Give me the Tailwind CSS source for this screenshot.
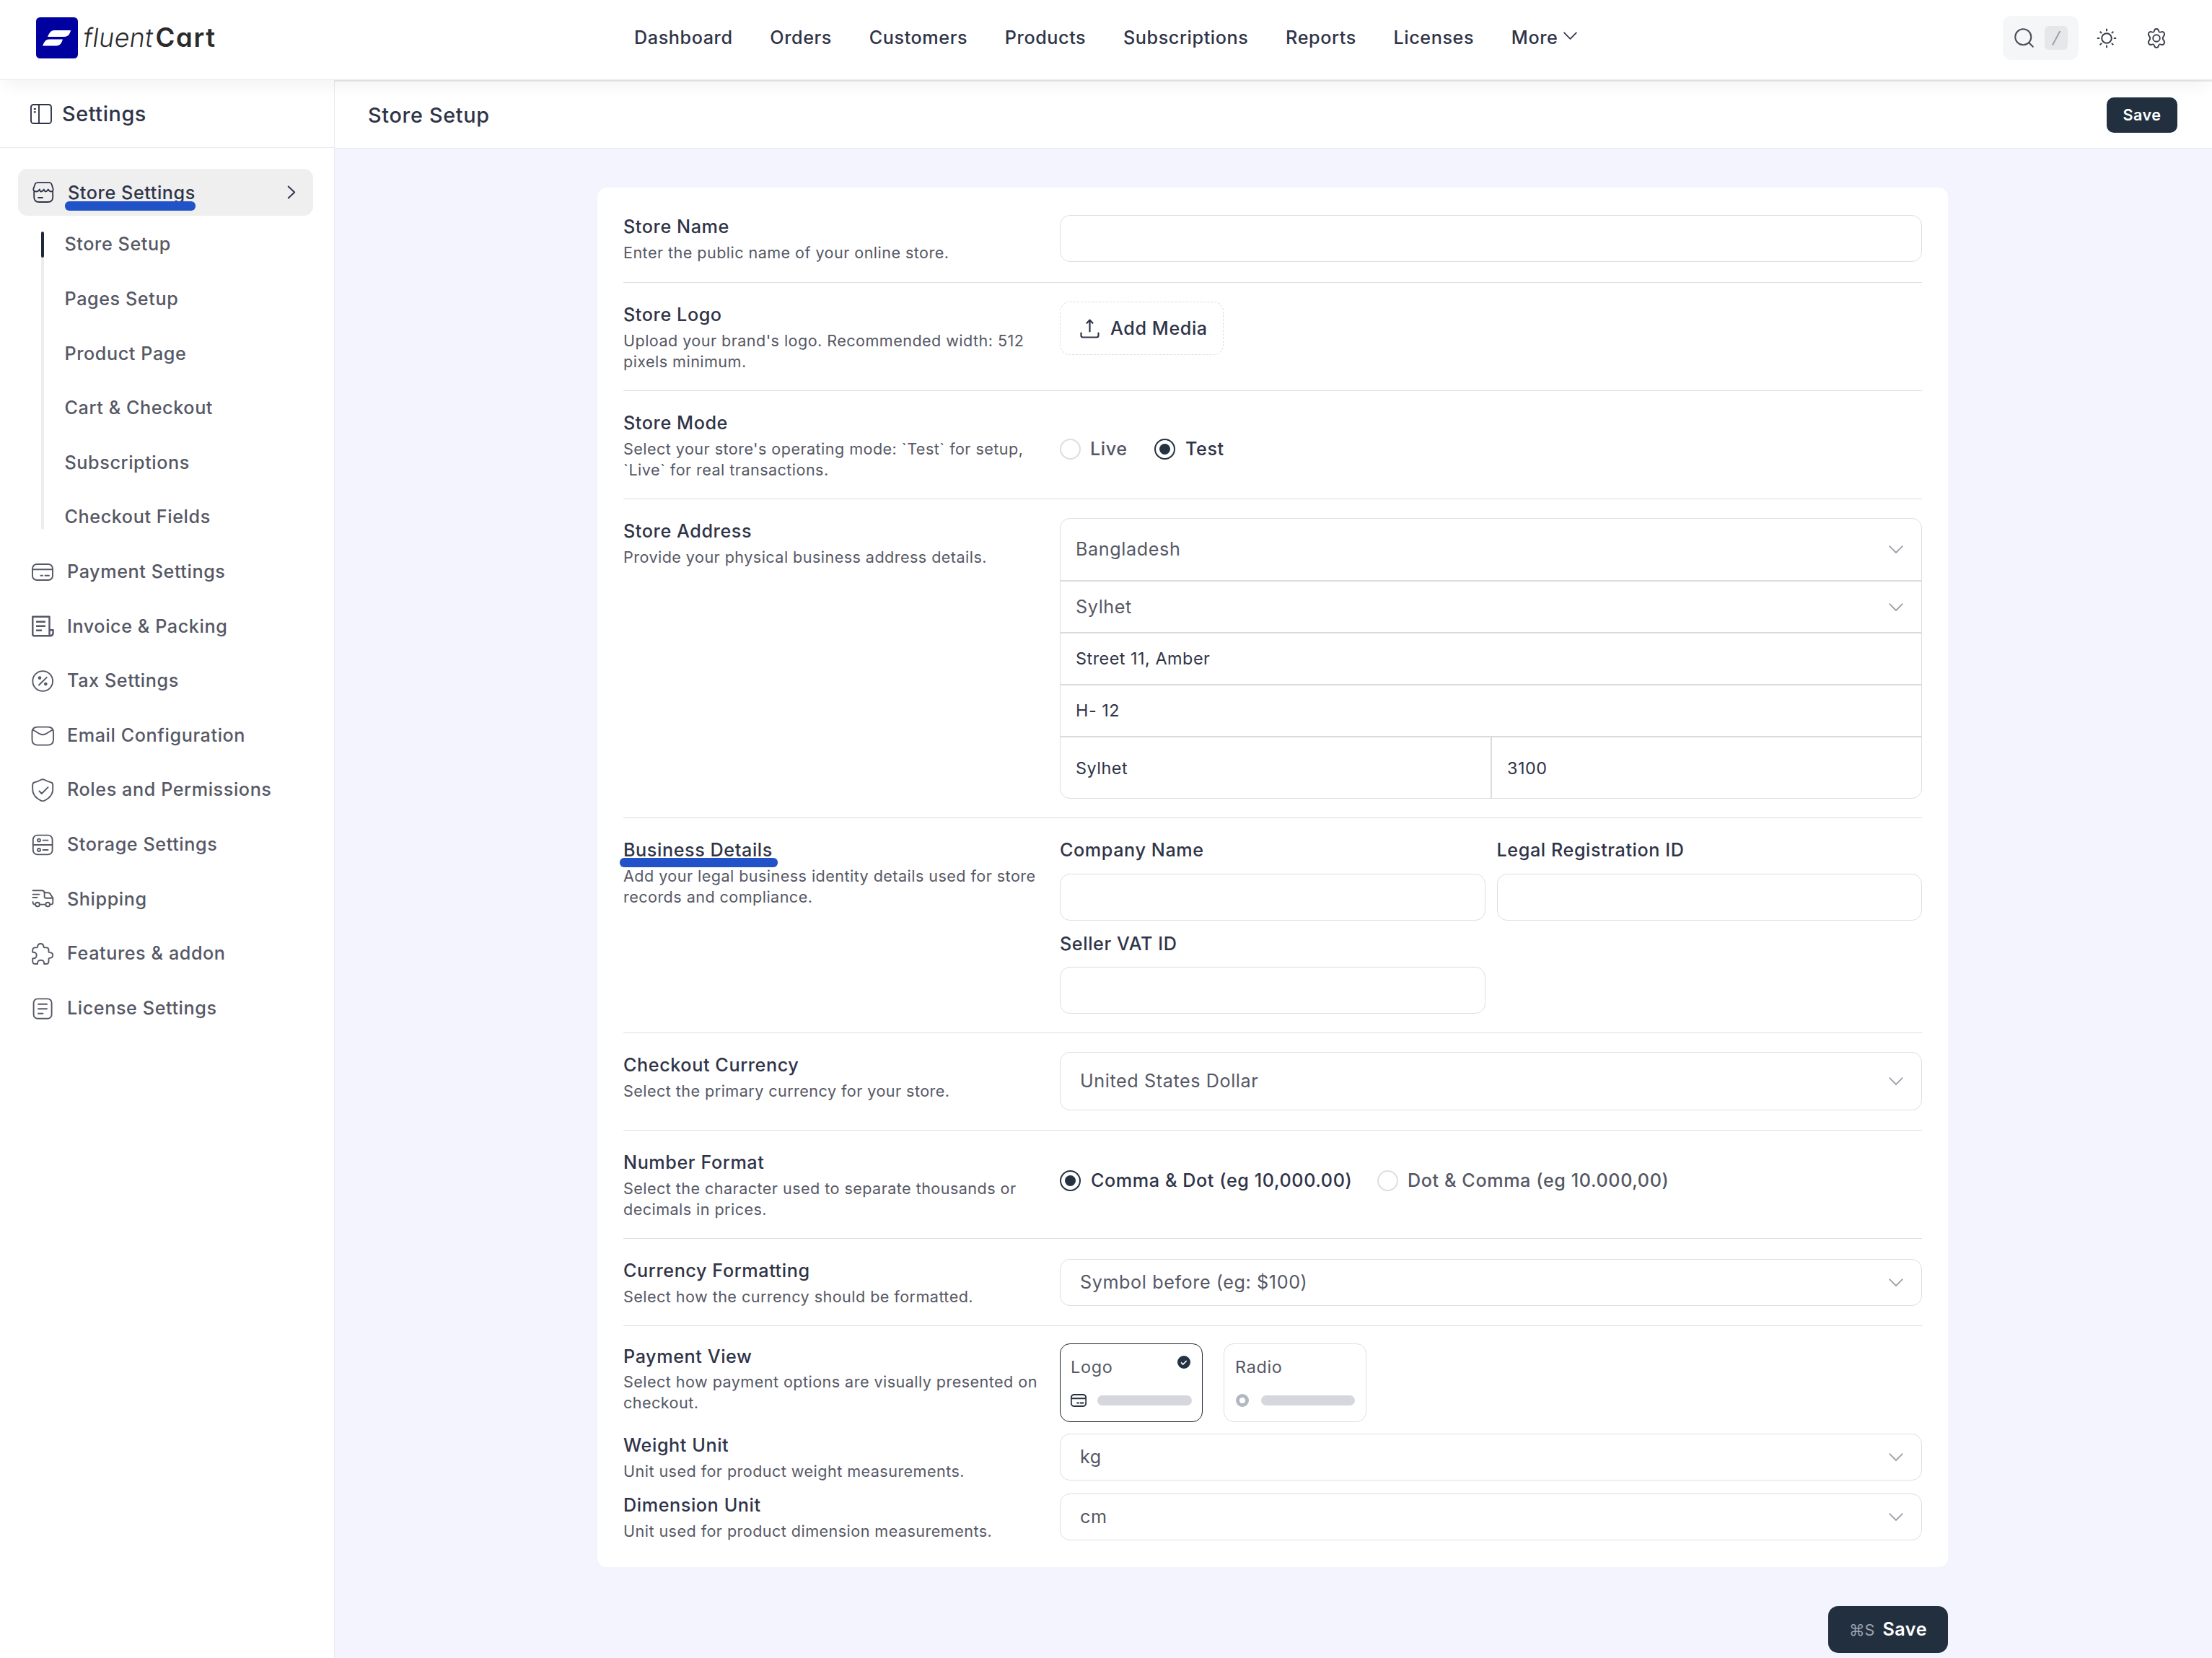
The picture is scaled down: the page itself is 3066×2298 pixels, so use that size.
<!DOCTYPE html>
<html lang="en">
<head>
<meta charset="utf-8">
<title>Store Setup</title>
<script src="https://cdn.jsdelivr.net/npm/@tailwindcss/browser@4"></script>
</head>
<body class="h-[2298px] w-[3066px] overflow-hidden bg-[#f3f4fd] font-['Inter',sans-serif] text-[25.2px] tracking-[0.58px] text-[#2f3448]">

<svg class="hidden">
  <symbol id="down" viewBox="0 0 20 12"><path d="M1.2 1.2 10 10l8.800-8.800" fill="none" stroke="currentColor" stroke-width="1.8" stroke-linecap="round" stroke-linejoin="round"/></symbol>
  <symbol id="card" viewBox="0 0 30 24"><g fill="none" stroke="currentColor" stroke-linecap="round"><rect x="1" y="1" width="28" height="22" rx="6"/><path d="M1 8.200h28M12.500 16.800h2.500M18.500 16.800h5.500"/></g></symbol>
</svg>

<!-- Top bar -->
<header class="relative z-10 flex h-[111px] items-center border-b border-[#e8e8e9] bg-white pb-[5px] shadow-[0_14px_22px_-6px_rgba(0,0,0,0.05)]">
  <div class="flex w-[879px] items-center pl-[50px]">
    <svg class="h-[57px] w-[58px]" viewBox="0 0 58 57"><rect width="58" height="57" rx="5.500" fill="#0000a0"/><path d="M25 18h23c-1 5-3.500 9-9 9H16c2-5 4.500-9 9-9Z" fill="#fff"/><path d="M18 30.500h19c-1.500 5-4 9-9 9H9c2-5 4-9 9-9Z" fill="#fff"/></svg>
    <div class="ml-[8px] flex text-[36px] leading-[57px] text-[#2b2b2b]">
      <span class="-skew-x-8 font-light tracking-[0.3px] [font-variant-ligatures:none]">fluent</span>
      <span class="ml-[3px] text-[36.500px] font-semibold tracking-[1.600px] [font-feature-settings:'cv11']">Cart</span>
    </div>
  </div>
  <nav class="mb-[2px] flex items-center gap-[51.700px] leading-[36px] font-medium">
    <a>Dashboard</a><a>Orders</a><a>Customers</a><a>Products</a><a>Subscriptions</a><a>Reports</a><a>Licenses</a>
    <a class="flex items-center">More <svg class="mb-[3px] ml-[8px] h-[12px] w-[19px]"><use href="#down"/></svg></a>
  </nav>
  <div class="ml-auto flex items-center pr-[63px]">
    <div class="mr-[25px] flex h-[61px] w-[105px] items-center rounded-[12px] bg-[#f4f6f7] pl-[16px]">
      <svg class="h-[28px] w-[28px]" viewBox="0 0 28 28" fill="none" stroke="#4b4d58" stroke-width="2" stroke-linecap="round"><circle cx="12.300" cy="12.300" r="11"/><path d="m20.300 20.300 5.500 5.500"/></svg>
      <span class="ml-[14px] flex h-[33px] w-[32px] items-center justify-center rounded-[6px] bg-[#e5e7e9]"><svg class="h-[20px] w-[12px]" viewBox="0 0 12 20"><path d="M11 .8 1.200 19" stroke="#9b9ea3" stroke-width="1.900" stroke-linecap="round"/></svg></span>
    </div>
    <svg class="h-[28px] w-[28px]" viewBox="0 0 28 28" fill="none" stroke="#3c3f4c" stroke-width="2"><circle cx="14" cy="14" r="6.800"/><path d="M14 .8v3.400M14 23.800v3.400M.8 14h3.400M23.800 14h3.400M4.700 4.700l2.400 2.400M20.900 20.900l2.400 2.400M4.700 23.300l2.400-2.400M20.900 7.100l2.400-2.400"/></svg>
    <svg class="ml-[41px] h-[28px] w-[28px]" viewBox="0 0 28 28" fill="none" stroke="#3c3f4c" stroke-width="1.900" stroke-linejoin="round"><circle cx="14" cy="14" r="4.800"/><path d="M11 3.700Q11.600 1 14 1t3 2.700q.5 2.700 3.200 1.700 2.800-1.200 4.300 1 1.500 2.600-.4 4.400-2.600 3.200 0 6.400 1.900 1.800.4 4.400-1.500 2.200-4.300 1-2.700-1-3.200 1.700Q16.400 27 14 27t-3-2.700q-.5-2.700-3.200-1.700-2.800 1.200-4.300-1-1.500-2.600.4-4.400 2.600-3.200 0-6.400-1.900-1.800-.4-4.400 1.500-2.200 4.300-1 2.700 1 3.200-1.700Z"/></svg>
  </div>
</header>

<div class="flex h-[2187px]">

  <!-- Sidebar -->
  <aside class="w-[464px] shrink-0 border-r border-[#ebebee] bg-white font-medium">
    <div class="flex h-[94px] items-center border-b border-[#ebebed] pt-[1px] pl-[42px] text-[28.800px]">
      <svg class="h-[28px] w-[30px]" viewBox="0 0 30 28" fill="none" stroke="#2f3448" stroke-width="1.900"><rect x="1" y="1" width="28" height="26" rx="3.500"/><path d="M12 1v26M4.800 7h3M4.800 11.200h3"/></svg>
      <span class="ml-[14px]">Settings</span>
    </div>

    <div class="relative mx-[25px] mt-[29px] mb-[2.400px] flex h-[65px] w-[409px] items-center rounded-[13px] bg-[#efefef] pl-[20px]">
      <svg class="h-[29px] w-[30px]" viewBox="0 0 30 29" fill="none" stroke="#2f3448" stroke-width="1.800" stroke-linecap="round" stroke-linejoin="round"><path d="M2.200 13.500V21q0 7 7 7h12q7 0 7-7v-7.500M7 1.200h16.500q2.300 0 3 2l2 6.300q.6 3.700-2.400 4-2.800 0-4.300-3-1.600 3-4.300 3-1-.3-1.700-3-1.600 3-4.300 3-1 0-1.600-3-1.600 3-4.600 3Q.6 13.200 1.400 9.500l2.200-6.300q.8-2 3.400-2ZM8 22h6"/></svg>
      <span class="mt-[2px] ml-[19px]">Store Settings</span>
      <svg class="ml-auto mr-[24px] h-[19px] w-[12px]" viewBox="0 0 12 19" fill="none" stroke="#2f3448" stroke-width="1.900" stroke-linecap="round" stroke-linejoin="round"><path d="m1.700 1.500 8.500 8-8.500 8"/></svg>
      <i class="absolute top-[45px] left-[65px] h-[13px] w-[181px] rounded-[6px] bg-[#2152c8]"></i>
    </div>

    <div class="flex text-[#565865]">
      <div class="mt-[20px] ml-[57px] h-[413px] w-[4px] rounded-full bg-[#ededee]"><div class="h-[36px] w-[4px] rounded-full bg-[#20283a]"></div></div>
      <ul class="ml-[28.500px] leading-[75.600px]">
        <li>Store Setup</li><li>Pages Setup</li><li>Product Page</li><li>Cart &amp; Checkout</li><li>Subscriptions</li><li>Checkout Fields</li>
      </ul>
    </div>

    <ul class="pl-[43px] leading-[75.600px] text-[#565865]">
      <li class="flex items-center"><svg class="mr-[18px] h-[32px] w-[32px]" viewBox="-1 -4 32 32" stroke-width="1.900"><use href="#card" width="30" height="24"/></svg>Payment Settings</li>
      <li class="flex items-center"><svg class="mr-[18px] h-[32px] w-[32px]" viewBox="0 0 32 32" fill="none" stroke="currentColor" stroke-width="2.400" stroke-linejoin="round"><path d="M25.500 21V2.800H2.300v24.400q0 2 2 2h22.800q3.500-.3 3.500-4V21.200h-5.100v5q0 3 1.600 3M7 9.800h13M7 15.800h13M7 21.800h8"/></svg>Invoice &amp; Packing</li>
      <li class="flex items-center"><svg class="mr-[18px] h-[32px] w-[32px]" viewBox="0 0 32 32" fill="none" stroke="currentColor" stroke-width="1.900" stroke-linecap="round"><circle cx="16.200" cy="16" r="13.900"/><path d="M21.800 10.800 11 21.500"/><circle cx="12" cy="11.600" r="1.400" fill="currentColor"/><circle cx="20.300" cy="20" r="1.400" fill="currentColor"/></svg>Tax Settings</li>
      <li class="flex items-center"><svg class="mr-[18px] h-[32px] w-[32px]" viewBox="0 0 32 32" fill="none" stroke="currentColor" stroke-width="1.900" stroke-linejoin="round"><path d="M9 3.600h14.500q7.500 0 7.500 7.500v10q0 7.500-7.500 7.500H9q-7.500 0-7.500-7.500v-10q0-7.500 7.500-7.500ZM3 7.800l9 5.400q4.200 2.200 8.400 0l9-5.400"/></svg>Email Configuration</li>
      <li class="flex items-center"><svg class="mr-[18px] h-[32px] w-[32px]" viewBox="0 0 32 32" fill="none" stroke="currentColor" stroke-width="1.900" stroke-linecap="round" stroke-linejoin="round"><path d="M14 1.700q2.300-1 4.600 0 4 2.300 9.100 3.600 2.500.7 2.500 3.500v6q0 8-6.800 13-5.200 3.600-7.200 3.600T9 27.800q-6.800-5-6.800-13v-6q0-2.800 2.500-3.500Q10 4 14 1.700ZM11.500 17.500l3.300 3.500 8.700-8.800"/></svg>Roles and Permissions</li>
      <li class="flex items-center"><svg class="mr-[18px] h-[32px] w-[32px]" viewBox="0 0 32 32" fill="none" stroke="currentColor" stroke-width="1.900" stroke-linecap="round"><rect x="2.800" y="2.600" width="26.800" height="26.800" rx="6"/><path d="M2.800 16h26.800M16.500 9.600h7M16.500 23h7"/><circle cx="11" cy="9.600" r="2"/><circle cx="11" cy="23" r="2"/></svg>Storage Settings</li>
      <li class="flex items-center"><svg class="mr-[18px] h-[32px] w-[32px]" viewBox="0 0 32 32" fill="none" stroke="currentColor" stroke-width="1.900" stroke-linecap="round" stroke-linejoin="round"><path d="M2.500 4.200H15q3.600 0 3.600 3.600v5.400q0 1.500 1.500 1.500h10.400M18.600 7.200h5.200q1.500 0 2.400 1.200l3.300 4.800q.8 1.300.8 2.500v5.300q0 2.600-2.800 2.600M2.500 9.600h9M2.500 14h6M2.500 20q0 3.600 3.200 3.600M12.200 23.600h7.500"/><circle cx="9" cy="23.600" r="2.900"/><circle cx="23.200" cy="23.600" r="2.900"/></svg>Shipping</li>
      <li class="flex items-center"><svg class="mr-[18px] h-[32px] w-[32px]" viewBox="0 0 32 32" fill="none" stroke="currentColor" stroke-width="1.900" stroke-linejoin="round"><path d="M9 6.500Q9.300 2 13.300 2t4.300 4.500q.2 .9 1.400.9h2q3.500 0 3.500 3.500v2q0 1.100 1 1.200 4.700.1 4.700 3.900t-4.700 3.900q-1 .1-1 1.200V26.500q0 3.500-3.500 3.500h-2.800q.4-5.300-4.600-5.300T9 30H6q-3.800 0-3.800-3.800v-3.800q5.500.2 5.500-4.300T2.200 13.800V11q0-3.600 3.600-3.600h2Q9 7.400 9 6.500Z"/></svg>Features &amp; addon</li>
      <li class="flex items-center"><svg class="mr-[18px] h-[32px] w-[32px]" viewBox="0 0 32 32" fill="none" stroke="currentColor" stroke-width="1.900" stroke-linecap="round"><rect x="3.600" y="2.400" width="25" height="27.400" rx="5.500"/><path d="M10 9.800h12M10 16.300h12M10 22.800h6.500"/></svg>License Settings</li>
    </ul>
  </aside>

  <!-- Main column -->
  <main class="flex grow flex-col items-center border-t-2 border-[#e9e9e9]">
    <div class="flex h-[93px] w-full items-center justify-between border-b border-[#ebebed] bg-white pr-[48px] pl-[46px]">
      <h1 class="pt-[1px] text-[28.800px] font-medium tracking-[0.700px]">Store Setup</h1>
      <button class="h-[49px] w-[98px] rounded-[10px] bg-[#222f3f] text-[21.600px] font-semibold tracking-[0.500px] text-white">Save</button>
    </div>

    <section class="mt-[54px] mr-[2px] h-[1912px] w-[1872px] shrink-0 rounded-[13px] bg-white px-[36px] pt-[36px]">

      <div class="flex h-[96px] justify-between border-b border-[#dddee0]">
        <div class="w-[590px]"><h3 class="mb-[4px] leading-[36px] font-medium">Store Name</h3><p class="text-[21.600px] leading-[28.800px] tracking-[0.440px] text-[#565865]">Enter the public name of your online store.</p></div>
        <div class="mt-[2px] h-[65px] w-[1195px] rounded-[14px] border border-[#dcdee1]"></div>
      </div>

      <div class="flex h-[150px] justify-between border-b border-[#dddee0] pt-[26px]">
        <div class="w-[590px]"><h3 class="mb-[4px] leading-[36px] font-medium">Store Logo</h3><p class="text-[21.600px] leading-[28.800px] tracking-[0.440px] text-[#565865]">Upload your brand's logo. Recommended width: 512<br>pixels minimum.</p></div>
        <div class="w-[1195px]">
          <div class="flex h-[74px] w-[227px] items-center rounded-[14px] border border-dashed border-[#dcdee1] pt-[2px] pl-[27px] font-medium">
            <svg class="mr-[15px] mb-[2px] h-[27px] w-[27px]" viewBox="0 0 27 27" fill="none" stroke="#2f3448" stroke-width="2.200" stroke-linecap="round" stroke-linejoin="round"><path d="M1.500 19.500V23q0 2.500 2.500 2.500h19q2.500 0 2.500-2.500v-3.500M13.500 17.500V1.800M9.500 5.800l4-4.200 4 4.200"/></svg>Add Media
          </div>
        </div>
      </div>

      <div class="flex h-[150px] justify-between border-b border-[#dddee0] pt-[26px]">
        <div class="w-[590px]"><h3 class="mb-[4px] leading-[36px] font-medium">Store Mode</h3><p class="text-[21.600px] leading-[28.800px] tracking-[0.440px] text-[#565865]">Select your store's operating mode: `Test` for setup,<br>`Live` for real transactions.</p></div>
        <div class="flex w-[1195px] items-center self-start pt-[36px] leading-[36px] font-medium">
          <i class="size-[29px] rounded-full border-2 border-[#dcdee1]"></i><span class="ml-[13px] w-[89px] text-[#565865]">Live</span>
          <i class="flex size-[29px] items-center justify-center rounded-full border-2 border-[#253241]"><b class="size-[15px] rounded-full bg-[#253241]"></b></i><span class="ml-[14px]">Test</span>
        </div>
      </div>

      <div class="flex h-[442px] justify-between border-b border-[#dddee0] pt-[26px]">
        <div class="w-[590px]"><h3 class="mb-[4px] leading-[36px] font-medium">Store Address</h3><p class="text-[21.600px] leading-[28.800px] tracking-[0.440px] text-[#565865]">Provide your physical business address details.</p></div>
        <div class="h-[389px] w-[1195px] rounded-[14px] border border-[#dcdee1] text-[23.400px] tracking-[0.500px]">
          <div class="flex h-[87px] items-center justify-between border-b-2 border-[#d9dbdd] pt-[1px] pr-[25px] pl-[21px] text-[25.200px] tracking-[0.600px] text-[#565865]">Bangladesh<svg class="h-[12px] w-[20px] text-[#9da0a8]"><use href="#down"/></svg></div>
          <div class="flex h-[72px] items-center justify-between border-b-2 border-[#d9dbdd] pt-[1px] pr-[25px] pl-[21px] text-[25.200px] tracking-[0.600px] text-[#565865]">Sylhet<svg class="h-[12px] w-[20px] text-[#9da0a8]"><use href="#down"/></svg></div>
          <div class="flex h-[72px] items-center border-b-2 border-[#d9dbdd] pl-[21px]">Street 11, Amber</div>
          <div class="flex h-[72px] items-center border-b-2 border-[#d9dbdd] pl-[21px]">H- 12</div>
          <div class="flex h-[84px]"><div class="flex w-[598px] items-center border-r-2 border-[#d9dbdd] pt-[1px] pl-[21px]">Sylhet</div><div class="flex items-center pt-[1px] pl-[21px]">3100</div></div>
        </div>
      </div>

      <div class="flex h-[298px] justify-between border-b border-[#dddee0] pt-[26px]">
        <div class="relative w-[590px]"><h3 class="mb-[4px] leading-[36px] font-medium">Business Details</h3><p class="text-[21.600px] leading-[28.800px] tracking-[0.440px] text-[#565865]">Add your legal business identity details used for store<br>records and compliance.</p>
          <i class="absolute top-[29px] -left-[5px] h-[13px] w-[219px] rounded-[6px] bg-[#2152c8]"></i>
        </div>
        <div class="grid w-[1195px] grid-cols-2 content-start gap-x-[16px] gap-y-[14px] leading-[36px] font-medium">
          <label>Company Name<span class="mt-[15px] block h-[65px] rounded-[14px] border border-[#dcdee1]"></span></label>
          <label>Legal Registration ID<span class="mt-[15px] block h-[65px] rounded-[14px] border border-[#dcdee1]"></span></label>
          <label>Seller VAT ID<span class="mt-[14px] block h-[65px] rounded-[14px] border border-[#dcdee1]"></span></label>
        </div>
      </div>

      <div class="flex h-[135px] justify-between border-b border-[#dddee0] pt-[26px]">
        <div class="w-[590px]"><h3 class="mb-[4px] leading-[36px] font-medium">Checkout Currency</h3><p class="text-[21.600px] leading-[28.800px] tracking-[0.440px] text-[#565865]">Select the primary currency for your store.</p></div>
        <div class="flex h-[81px] w-[1195px] items-center justify-between rounded-[14px] border border-[#dcdee1] pt-[1px] pr-[25px] pl-[27px] text-[#565865]">United States Dollar<svg class="h-[12px] w-[20px] text-[#9da0a8]"><use href="#down"/></svg></div>
      </div>

      <div class="flex h-[150px] justify-between border-b border-[#dddee0] pt-[26px]">
        <div class="w-[590px]"><h3 class="mb-[4px] leading-[36px] font-medium">Number Format</h3><p class="text-[21.600px] leading-[28.800px] tracking-[0.440px] text-[#565865]">Select the character used to separate thousands or<br>decimals in prices.</p></div>
        <div class="flex w-[1195px] items-center self-start pt-[25px] leading-[36px] font-medium">
          <i class="flex size-[29px] items-center justify-center rounded-full border-2 border-[#253241]"><b class="size-[15px] rounded-full bg-[#253241]"></b></i><span class="ml-[14px] w-[397px]">Comma &amp; Dot (eg 10,000.00)</span>
          <i class="size-[29px] rounded-full border-2 border-[#dcdee1]"></i><span class="ml-[13px] text-[#565865]">Dot &amp; Comma (eg 10.000,00)</span>
        </div>
      </div>

      <div class="flex h-[121px] justify-between border-b border-[#dddee0] pt-[26px]">
        <div class="w-[590px]"><h3 class="mb-[4px] leading-[36px] font-medium">Currency Formatting</h3><p class="text-[21.600px] leading-[28.800px] tracking-[0.440px] text-[#565865]">Select how the currency should be formatted.</p></div>
        <div class="mt-[2px] flex h-[65px] w-[1195px] items-center justify-between rounded-[14px] border border-[#dcdee1] pr-[25px] pl-[27px] text-[#565865]">Symbol before (eg: $100)<svg class="h-[12px] w-[20px] text-[#9da0a8]"><use href="#down"/></svg></div>
      </div>

      <div class="flex h-[147px] justify-between pt-[24px]">
        <div class="w-[590px]"><h3 class="mb-[3px] leading-[36px] font-medium">Payment View</h3><p class="text-[21.600px] leading-[28.800px] tracking-[0.440px] text-[#565865]">Select how payment options are visually presented on<br>checkout.</p></div>
        <div class="flex w-[1195px] gap-[29px] text-[23.400px] tracking-[0.700px] text-[#565865]">
          <div class="relative h-[109px] w-[198px] rounded-[14px] border border-[#20242f] px-[14px] pt-[16px]">
            <div class="leading-[32px]">Logo</div>
            <div class="mt-[21px] flex items-center justify-between"><svg class="h-[18px] w-[22px] text-[#253241] [stroke-width:2.700px]"><use href="#card"/></svg><i class="h-[14px] w-[131px] rounded-full bg-[#d6d7dd]"></i></div>
            <svg class="absolute top-[16px] right-[16px] size-[18px]" viewBox="0 0 18 18"><circle cx="9" cy="9" r="9" fill="#253241"/><path d="m5 9.300 2.700 2.700 5-5" fill="none" stroke="#fff" stroke-width="1.700"/></svg>
          </div>
          <div class="h-[109px] w-[198px] rounded-[14px] border border-[#dcdee1] px-[15px] pt-[16px]">
            <div class="leading-[32px]">Radio</div>
            <div class="mt-[21px] flex items-center justify-between"><i class="ml-[1px] size-[18px] rounded-full border-[5px] border-[#b3b7c1]"></i><i class="h-[14px] w-[130px] rounded-full bg-[#d6d7dd]"></i></div>
          </div>
        </div>
      </div>

      <div class="flex h-[83px] justify-between">
        <div class="w-[590px]"><h3 class="mb-[4px] leading-[36px] font-medium">Weight Unit</h3><p class="text-[21.600px] leading-[28.800px] tracking-[0.440px] text-[#565865]">Unit used for product weight measurements.</p></div>
        <div class="mt-[2px] flex h-[65px] w-[1195px] items-center justify-between rounded-[14px] border border-[#dcdee1] pr-[25px] pl-[27px] text-[#565865]">kg<svg class="h-[12px] w-[20px] text-[#9da0a8]"><use href="#down"/></svg></div>
      </div>

      <div class="flex justify-between">
        <div class="w-[590px]"><h3 class="mb-[4px] leading-[36px] font-medium">Dimension Unit</h3><p class="text-[21.600px] leading-[28.800px] tracking-[0.440px] text-[#565865]">Unit used for product dimension measurements.</p></div>
        <div class="mt-[2px] flex h-[65px] w-[1195px] items-center justify-between rounded-[14px] border border-[#dcdee1] pr-[25px] pl-[27px] text-[#565865]">cm<svg class="h-[12px] w-[20px] text-[#9da0a8]"><use href="#down"/></svg></div>
      </div>
    </section>

    <div class="mt-[54px] mr-[2px] flex w-[1872px] justify-end">
      <button class="flex h-[65px] w-[166px] items-center justify-center gap-[11px] rounded-[14px] bg-[#222f3f] pt-[1px] font-semibold tracking-[0.500px] text-white"><span class="text-[21.600px] font-normal tracking-[0px] text-[#9aa3ae]">⌘S</span>Save</button>
    </div>
  </main>
</div>
</body>
</html>
